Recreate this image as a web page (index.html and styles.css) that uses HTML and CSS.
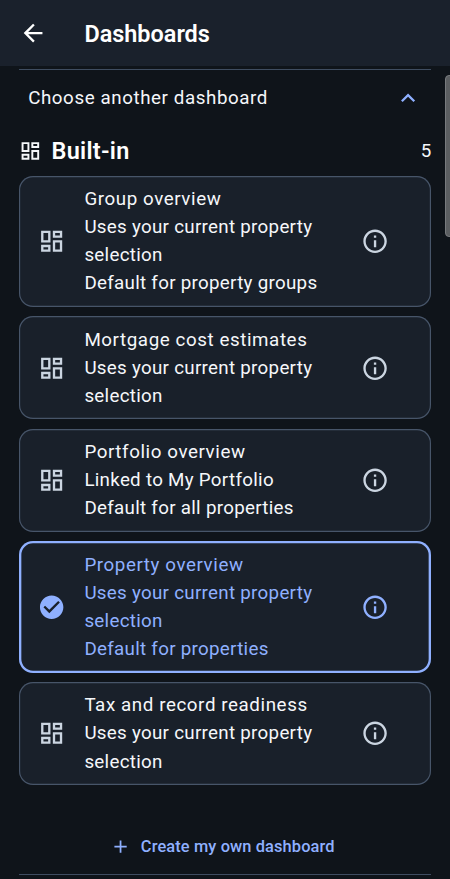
FILE: index.html
```
<!DOCTYPE html>
<html lang="en">
<head>
<meta charset="utf-8">
<title>Dashboards</title>
<link rel="stylesheet" href="styles.css">
</head>
<body>
<svg class="defs" aria-hidden="true">
  <symbol id="dash" viewBox="0.35 -0.2 24 24"><path d="M19 5v2h-4V5h4M9 5v6H5V5h4m10 8v6h-4v-6h4M9 17v2H5v-2h4M21 3h-8v6h8V3zM11 3H3v10h8V3zm10 8h-8v10h8V11zm-10 4H3v6h8v-6z"/></symbol>
  <symbol id="info" viewBox="0 -0.2 24 24"><path d="M11 7h2v2h-2zm0 4h2v6h-2zm1-9C6.480 2 2 6.480 2 12s4.480 10 10 10 10-4.480 10-10S17.520 2 12 2zm0 18c-4.410 0-8-3.590-8-8s3.590-8 8-8 8 3.590 8 8-3.590 8-8 8z"/></symbol>
  <symbol id="check" viewBox="0.35 -0.2 24 24"><path d="M12 2C6.500 2 2 6.500 2 12s4.500 10 10 10 10-4.500 10-10S17.500 2 12 2zm-2 15-5-5 1.410-1.410L10 14.170l7.590-7.590L19 8l-9 9z"/></symbol>
</svg>
<header class="appbar">
  <svg class="icon" viewBox="0 0 24 24"><path d="M20 11H7.830l5.590-5.590L12 4l-8 8 8 8 1.410-1.410L7.830 13H20v-2z"/></svg>
  <h1>Dashboards</h1>
</header>
<main>
  <div class="chooser">
    <span>Choose another dashboard</span>
    <svg class="icon" viewBox="0 0 24 24"><path d="M12 8l-6 6 1.410 1.410L12 10.830l4.590 4.580L18 14z"/></svg>
  </div>
  <div class="section">
    <svg class="icon"><use href="#dash"/></svg>
    <h2>Built-in</h2>
    <span>5</span>
  </div>
  <div class="list">
    <div class="card">
      <svg class="icon"><use href="#dash"/></svg>
      <div class="text"><div class="name">Group overview</div><div>Uses your current property selection</div><div>Default for property groups</div></div>
      <svg class="icon"><use href="#info"/></svg>
    </div>
    <div class="card">
      <svg class="icon"><use href="#dash"/></svg>
      <div class="text"><div class="name">Mortgage cost estimates</div><div>Uses your current property selection</div></div>
      <svg class="icon"><use href="#info"/></svg>
    </div>
    <div class="card">
      <svg class="icon"><use href="#dash"/></svg>
      <div class="text"><div class="name">Portfolio overview</div><div>Linked to My Portfolio</div><div>Default for all properties</div></div>
      <svg class="icon"><use href="#info"/></svg>
    </div>
    <div class="card selected">
      <svg class="icon"><use href="#check"/></svg>
      <div class="text"><div class="name">Property overview</div><div>Uses your current property selection</div><div>Default for properties</div></div>
      <svg class="icon"><use href="#info"/></svg>
    </div>
    <div class="card">
      <svg class="icon"><use href="#dash"/></svg>
      <div class="text"><div class="name">Tax and record readiness</div><div>Uses your current property selection</div></div>
      <svg class="icon"><use href="#info"/></svg>
    </div>
  </div>
  <div class="create">
    <svg class="icon" viewBox="0 0 24 24"><path d="M19 13h-6v6h-2v-6H5v-2h6V5h2v6h6v2z"/></svg>
    <span>Create my own dashboard</span>
  </div>
</main>
<div class="scrollbar"></div>
</body>
</html>
```
FILE: styles.css
```
* { box-sizing: border-box; }
html, body { height: 879px; overflow: hidden; }
body {
  margin: 0;
  background: #0f141a;
  color: #f5f7fa;
  font: 400 18.75px/28.125px Roboto, sans-serif;
  letter-spacing: 0.586px;
}
h1, h2 { margin: 0; font-size: 23.44px; line-height: 30px; letter-spacing: 0; font-weight: 600; color: #fff; }
.defs { position: absolute; width: 0; height: 0; }
.icon { width: 28.125px; height: 28.125px; flex: none; display: block; fill: currentColor; }
.appbar {
  height: 65.625px;
  background: #1a212c;
  display: flex;
  align-items: center;
  gap: 37.5px;
  padding: 2px 0 0 18.75px;
}
.appbar .icon { margin-top: -2px; color: #fff; }
main { margin: 3.4px 18.75px 0; border-top: 1.17px solid #3f4d61; }
.chooser { height: 56.25px; display: flex; align-items: center; justify-content: space-between; padding: 0 9.4px; }
.chooser .icon { color: #8fb0ff; }
.section { height: 49.4px; display: flex; align-items: center; }
.section .icon { width: 23.44px; height: 23.44px; }
.section h2 { margin-left: 9.4px; flex: 1; letter-spacing: 0.27px; }
.section span { letter-spacing: 0; }
.list { display: flex; flex-direction: column; gap: 9.375px; }
.card {
  background: #19202a;
  border-radius: 14px;
  box-shadow: inset 0 0 0 1.17px #475569;
  padding: 9.375px 42.2px 9.375px 18.75px;
  display: flex;
  align-items: center;
  gap: 18.75px;
}
.card .icon { color: #cbd5e1; }
.text { flex: 1; letter-spacing: 0.293px; }
.name { letter-spacing: 0.586px; }
.selected { box-shadow: inset 0 0 0 2.34px #8fb0ff; color: #8fb0ff; }
.selected .icon { color: #8fb0ff; }
.create {
  margin-top: 32px;
  height: 57.6px;
  padding: 3px 5px 0 0;
  border-bottom: 1.17px solid #3f4d61;
  display: flex;
  align-items: center;
  justify-content: center;
  gap: 9.4px;
  color: #8fb0ff;
  font-size: 16.4px;
  font-weight: 500;
  letter-spacing: 0.117px;
}
.create .icon { width: 21.1px; height: 21.1px; }
.scrollbar { position: absolute; left: 444.5px; top: 75px; width: 9px; height: 162px; border-radius: 4px; background: #5b5e61; border: 1px solid #777a7d; }
```
